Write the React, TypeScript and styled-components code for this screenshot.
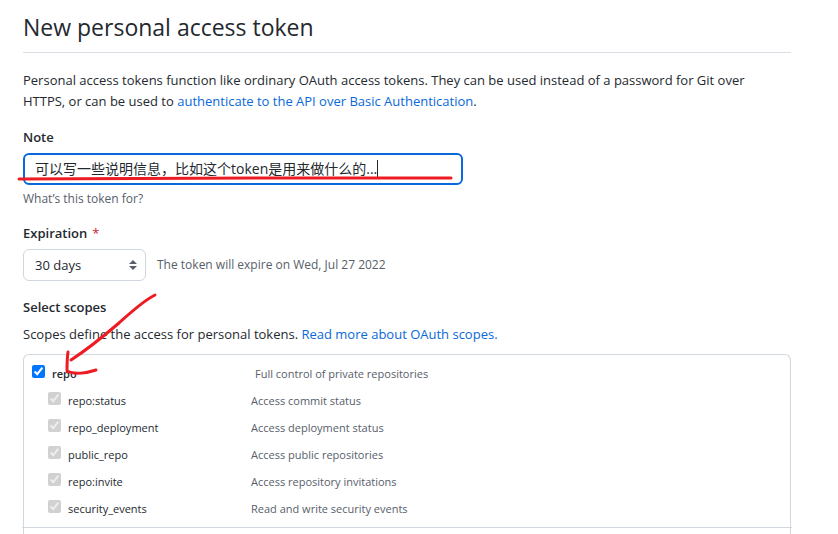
import React, { useState } from "react";
import styled, { createGlobalStyle, css } from "styled-components";

const GlobalStyle = createGlobalStyle`
  *, *::before, *::after { box-sizing: border-box; }
  body {
    margin: 0;
    background: #ffffff;
    color: #24292f;
    font-family: "Open Sans", "Noto Sans CJK SC", sans-serif;
    font-size: 13px;
    line-height: 21px;
  }
`;

const Page = styled.main`
  position: relative;
  padding: 9px 47px 0 23px;
`;

const Title = styled.h1`
  margin: 0 0 17px;
  padding-bottom: 7px;
  border-bottom: 1px solid #d8dee4;
  font-size: 23px;
  line-height: 36px;
  font-weight: 400;
`;

const Paragraph = styled.p`
  max-width: 750px;
  margin: 0;
`;

const Link = styled.a`
  color: #0969da;
  text-decoration: none;
`;

const Group = styled.div<{ $gap: number }>`
  display: flex;
  flex-direction: column;
  align-items: flex-start;
  margin-top: ${(p) => p.$gap}px;
`;

const labelStyle = css`
  margin: 0;
  font-size: 13px;
  line-height: 21px;
  font-weight: 600;
`;

const Label = styled.label`
  ${labelStyle}
`;

const Heading = styled.h2`
  ${labelStyle}
  margin-bottom: 6px;
`;

const Required = styled.span`
  margin-left: 5px;
  color: #cf222e;
  font-weight: 400;
`;

const Field = styled.div`
  display: flex;
  align-items: center;
  width: 440px;
  max-width: 100%;
  height: 32px;
  margin: 5px 0 4px;
  padding: 0 10px;
  border: 2px solid #0969da;
  border-radius: 6px;
`;

const TextInput = styled.input`
  field-sizing: content;
  max-width: 100%;
  padding: 0 0 2px;
  border: 0;
  outline: 0;
  background: transparent;
  color: inherit;
  font: inherit;
  font-size: 14px;
  caret-color: transparent;
`;

const Caret = styled.span`
  width: 1px;
  height: 19px;
  background: #24292f;
`;

const Hint = styled.span`
  color: #57606a;
  font-size: 12px;
  line-height: 20px;
`;

const Row = styled.div`
  display: flex;
  align-items: center;
  gap: 11px;
  margin-top: 5px;
`;

const SelectBox = styled.div`
  display: grid;
  align-items: center;
  width: 123px;
  > * { grid-area: 1 / 1; }
`;

const Select = styled.select`
  appearance: none;
  width: 100%;
  height: 32px;
  padding: 0 24px 0 11px;
  border: 1px solid #d0d7de;
  border-radius: 6px;
  background: #ffffff;
  color: inherit;
  font: inherit;
`;

const SelectArrows = styled.svg`
  justify-self: end;
  margin-right: 9px;
  pointer-events: none;
`;

const ScopeBox = styled.div`
  margin-top: 9px;
  border: 1px solid #d0d7de;
  border-bottom: 0;
  border-radius: 6px 6px 0 0;
  padding: 5px 0 6px;
`;

const ScopeList = styled.ul`
  list-style: none;
  margin: 0 -2px;
  padding: 0 2px 5px;
  border-bottom: 1px solid #d0d7de;
`;

const ScopeRow = styled.li<{ $parent?: boolean }>`
  display: flex;
  align-items: center;
  height: 27px;
  padding-left: ${(p) => (p.$parent ? 8 : 24)}px;
  font-size: 11px;
`;

const ScopeLabel = styled.label<{ $parent?: boolean }>`
  display: flex;
  align-items: center;
  gap: 7px;
  width: ${(p) => (p.$parent ? 223 : 203)}px;
  font-weight: ${(p) => (p.$parent ? 600 : 400)};
`;

const Checkbox = styled.input`
  width: 13px;
  height: 13px;
  margin: 0 0 5px;
`;

const ScopeText = styled.span`
  color: #57606a;
`;

const Marks = styled.svg`
  position: absolute;
  top: 0;
  left: 0;
  pointer-events: none;
`;

const scopes = [
  { name: "repo:status", text: "Access commit status" },
  { name: "repo_deployment", text: "Access deployment status" },
  { name: "public_repo", text: "Access public repositories" },
  { name: "repo:invite", text: "Access repository invitations" },
  { name: "security_events", text: "Read and write security events" },
];

export default function App() {
  const [note, setNote] = useState("可以写一些说明信息，比如这个token是用来做什么的...");
  const [repo, setRepo] = useState(true);

  return (
    <>
      <GlobalStyle />
      <Page>
        <Title>New personal access token</Title>
        <Paragraph>
          Personal access tokens function like ordinary OAuth access tokens. They can be used instead of a
          password for Git over HTTPS, or can be used to{" "}
          <Link href="#basic-auth">authenticate to the API over Basic Authentication</Link>.
        </Paragraph>

        <Group $gap={15}>
          <Label htmlFor="note">Note</Label>
          <Field>
            <TextInput id="note" type="text" value={note} onChange={(e) => setNote(e.target.value)} />
            <Caret />
          </Field>
          <Hint>What’s this token for?</Hint>
        </Group>

        <Group $gap={14}>
          <Label htmlFor="expiration">
            Expiration<Required>*</Required>
          </Label>
          <Row>
            <SelectBox>
              <Select id="expiration" defaultValue="30">
                <option value="7">7 days</option>
                <option value="30">30 days</option>
                <option value="60">60 days</option>
              </Select>
              <SelectArrows width="8" height="10" viewBox="0 0 8 10" fill="#57606a" aria-hidden="true">
                <path d="M4 0 8 4H0zM4 10 0 6h8z" />
              </SelectArrows>
            </SelectBox>
            <Hint>The token will expire on Wed, Jul 27 2022</Hint>
          </Row>
        </Group>

        <Group $gap={16}>
          <Heading>Select scopes</Heading>
          <Paragraph>
            Scopes define the access for personal tokens. <Link href="#scopes">Read more about OAuth scopes.</Link>
          </Paragraph>
        </Group>

        <ScopeBox>
          <ScopeList>
            <ScopeRow $parent>
              <ScopeLabel $parent>
                <Checkbox type="checkbox" checked={repo} onChange={(e) => setRepo(e.target.checked)} />
                repo
              </ScopeLabel>
              <ScopeText>Full control of private repositories</ScopeText>
            </ScopeRow>
            {scopes.map((s) => (
              <ScopeRow key={s.name}>
                <ScopeLabel>
                  <Checkbox type="checkbox" checked={repo} disabled={repo} readOnly />
                  {s.name}
                </ScopeLabel>
                <ScopeText>{s.text}</ScopeText>
              </ScopeRow>
            ))}
          </ScopeList>
        </ScopeBox>

        <Marks
          width="480"
          height="400"
          viewBox="0 0 480 400"
          fill="none"
          stroke="#ed1c24"
          strokeWidth="3"
          strokeLinecap="round"
          strokeLinejoin="round"
          aria-hidden="true"
        >
          <path d="M19 179C120 178 200 178 260 178S400 178 451 178" />
          <path d="M155 295C143 301 130 313 119 323C105 335 91 347 71 360" />
          <path d="M68 352C67 359 67 366 67 371C74 375 87 373 96 370" />
        </Marks>
      </Page>
    </>
  );
}
